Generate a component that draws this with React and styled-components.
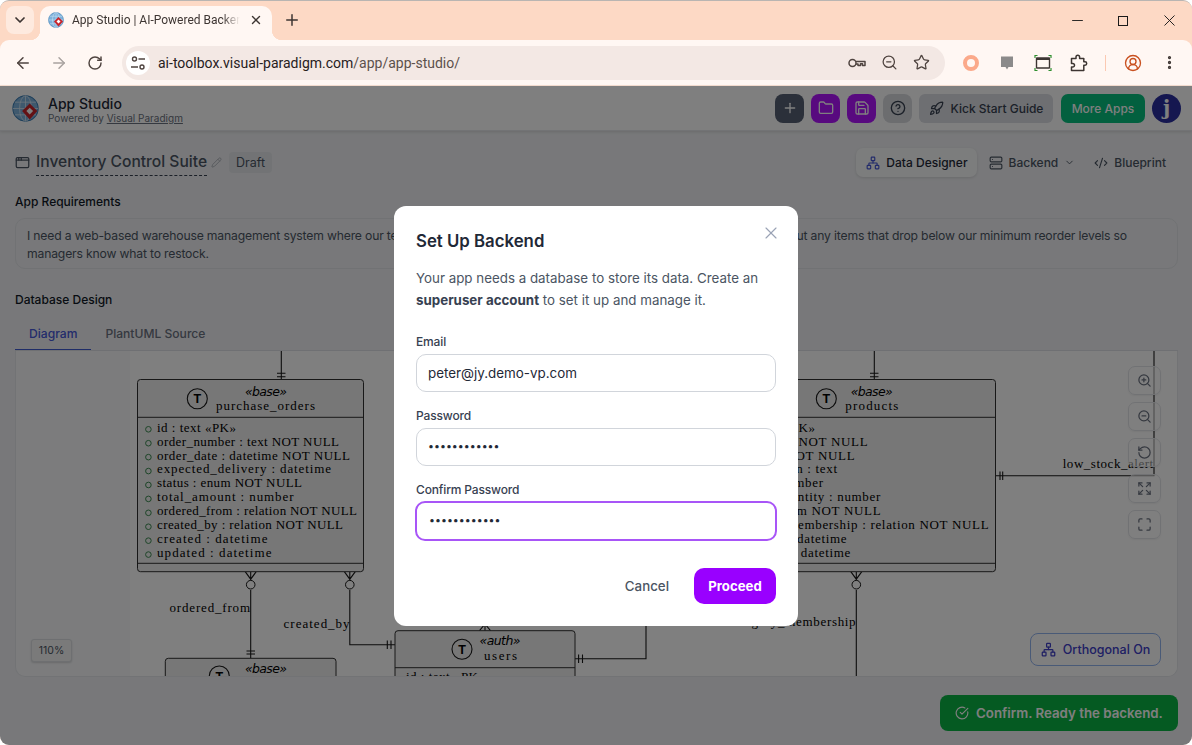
import styled, { createGlobalStyle } from "styled-components";
import {
  ArrowLeft,
  ArrowRight,
  AppWindow,
  ChevronDown,
  CircleCheckBig,
  CircleHelp,
  CircleUserRound,
  CodeXml,
  EllipsisVertical,
  Expand,
  Folder,
  Maximize,
  Minus,
  Network,
  Pencil,
  Plus,
  Rocket,
  RotateCcw,
  RotateCw,
  Save,
  Server,
  Star,
  X,
  ZoomIn,
  ZoomOut,
} from "lucide-react";

const GlobalStyle = createGlobalStyle`
  * { box-sizing: border-box; }
  html, body { margin: 0; padding: 0; background: #fff; }
  body { font-family: Inter, "Noto Sans", sans-serif; }
`;

function Logo({ size }) {
  return (
    <svg width={size} height={size} viewBox="0 0 32 32">
      <circle cx="16" cy="16" r="15" fill="#7fb2dc" stroke="#3d7fb5" strokeWidth="1.2" />
      <g fill="none" stroke="#dcecf7" strokeWidth="0.9">
        <ellipse cx="16" cy="16" rx="7" ry="15" />
        <path d="M16 1v30M1 16h30M3.5 8.5h25M3.5 23.5h25" />
      </g>
      <path d="M21 10l9 9-9 10-9-10z" fill="#c8252b" />
      <path d="M21 15l4 4-4 4-4-4z" fill="#fff" />
    </svg>
  );
}

function KeyIcon() {
  return (
    <svg width="20" height="20" viewBox="0 0 20 20" fill="none" stroke="#4f4440" strokeWidth="1.5">
      <circle cx="5.5" cy="10" r="3.5" />
      <path d="M9 8.5h9v4h-2.5v-1.7h-2v1.7H11V11H9" strokeLinejoin="round" />
    </svg>
  );
}

function SiteControlsIcon() {
  return (
    <svg width="16" height="16" viewBox="0 0 16 16" fill="none" stroke="#4f4440" strokeWidth="1.4">
      <circle cx="4.5" cy="4" r="2" />
      <path d="M8.5 4H15M1 12h7" />
      <circle cx="12" cy="12" r="2" />
    </svg>
  );
}

function ChatIcon() {
  return (
    <svg width="16" height="16" viewBox="0 0 16 16">
      <path d="M2 1.5h12v10.5h-4.5L8 14.5 6.500 12H2z" fill="#8b8a8a" />
    </svg>
  );
}

function CaptureIcon() {
  return (
    <svg width="18" height="18" viewBox="0 0 18 18" fill="none">
      <path d="M1 4V1.500h2.500M14.500 1.500H17V4M17 14v2.500h-2.500M3.500 16.500H1V14" stroke="#2f8f2f" strokeWidth="1.200" />
      <rect x="2.500" y="4" width="13" height="10" rx="0.500" stroke="#3d3532" strokeWidth="1.400" />
      <path d="M2.500 5h13" stroke="#3d3532" strokeWidth="2" />
    </svg>
  );
}

function PuzzleIcon() {
  return (
    <svg width="18" height="18" viewBox="0 0 18 18" fill="none" stroke="#3d3532" strokeWidth="1.500" strokeLinejoin="round">
      <path d="M1.500 4.500H6V3a1.800 1.800 0 0 1 3.600 0v1.500h4.200v3.300H15a1.700 1.700 0 0 1 0 3.400h-1.200v5.300H1.500v-3.500h1.200a1.800 1.800 0 0 0 0-3.600H1.500z" />
    </svg>
  );
}

const purchaseRows = [
  ["id : text «PK»", 79],
  ["order_number : text NOT NULL", 182],
  ["order_date : datetime NOT NULL", 193],
  ["expected_delivery : datetime", 174],
  ["status : enum NOT NULL", 145],
  ["total_amount : number", 136.5],
  ["ordered_from : relation NOT NULL", 200],
  ["created_by : relation NOT NULL", 186],
  ["created : datetime", 110.5],
  ["updated : datetime", 114.5],
];

const productRows = [
  ["id : text «PK»", 815.7],
  ["sku : text NOT NULL", 868.3],
  ["name : text NOT NULL", 855.3],
  ["description : text", 837.7],
  ["price : number", 823.7],
  ["stock_quantity : number", 881],
  ["status : enum NOT NULL", 881.3],
  ["category_membership : relation NOT NULL", 989.3],
  ["created : datetime", 847.3],
  ["updated : datetime", 851],
];

const ROW_STEP = 13.92;

function EntityShell({ x, y, w, h, divider, cx, cy, kind, kindX, kindW, kindY, name, nameX, nameW, nameY, bottom }) {
  return (
    <g>
      <BoxRect x={x} y={y} width={w} height={h} rx="3" />
      <BoxLine x1={x} x2={x + w} y1={divider} y2={divider} />
      {bottom && <BoxLine x1={x} x2={x + w} y1={bottom} y2={bottom} />}
      <circle cx={cx} cy={cy} r="10" fill="none" stroke="#181818" strokeWidth="1.100" />
      <TMark x={cx} y={cy + 4.500}>T</TMark>
      <Stereo x={kindX} y={kindY} textLength={kindW} lengthAdjust="spacing">
        «{kind}»
      </Stereo>
      {name && (
        <Mono x={nameX} y={nameY} textLength={nameW} lengthAdjust="spacing">
          {name}
        </Mono>
      )}
    </g>
  );
}

function CrowFoot({ x, y }) {
  return (
    <g>
      <Edge d={`M${x - 5.500} ${y}L${x} ${y + 7.500}L${x + 5.500} ${y}M${x} ${y}V${y + 8.500}`} />
      <circle cx={x} cy={y + 13} r="4.300" fill="none" stroke="#181818" strokeWidth="1" />
    </g>
  );
}

function Diagram() {
  return (
    <DiagramSvg width="1163" height="326" viewBox="15 351 1163 326">
      <rect x="130" y="351" width="1048" height="326" fill="#fff" />
      {/* edges */}
      <Edge d="M281.300 351V379.500M277 373.300H285.500M277 376.700H285.500" />
      <Edge d="M874.300 351V379.500M870 373.300H878.500M870 376.700H878.500" />
      <Edge d="M1154 351V475.700H995.500M1000 471.500V480M1002.700 471.500V480" />
      <Edge d="M250.700 590V658.300M246.500 651H255M246.500 654H255" />
      <Edge d="M349.800 590V644.700H395M387.300 640.500V649M391 640.500V649" />
      <Edge d="M575 658.700H646V620M578.600 654.500V663M582.500 654.500V663" />
      <Edge d="M856.300 590V677" />
      <Edge d="M485 620V630.700M479.500 630.700L485 624L490.500 630.700" />

      <CrowFoot x={250.700} y={571.700} />
      <CrowFoot x={349.800} y={571.700} />
      <CrowFoot x={856.300} y={571.700} />

      <EntityShell
        x={137.500} y={379.500} w={226} h={192.200} divider={417.300} bottom={563.300}
        cx={197.300} cy={398.700}
        kind="base" kindX={245} kindW={42} kindY={395.700}
        name="purchase_orders" nameX={216} nameW={99} nameY={410}
      />
      {purchaseRows.map(([text, len], i) => (
        <g key={text}>
          <Dot cx="148.400" cy={429.300 + i * ROW_STEP} r="2.800" />
          <Mono x="157" y={431.700 + i * ROW_STEP} textLength={len} lengthAdjust="spacing">
            {text}
          </Mono>
        </g>
      ))}

      <EntityShell
        x={770} y={379.500} w={225.500} h={192.200} divider={417.300} bottom={563.300}
        cx={826.300} cy={398.700}
        kind="base" kindX={850.700} kindW={42} kindY={395.700}
        name="products" nameX={845.300} nameW={53} nameY={410}
      />
      {productRows.map(([text, end], i) => (
        <EndMono key={text} x={end} y={431.700 + i * ROW_STEP}>
          {text}
        </EndMono>
      ))}

      <EntityShell
        x={165.300} y={658.300} w={170.700} h={60} divider={696}
        cx={219.300} cy={676}
        kind="base" kindX={245} kindW={42} kindY={673}
      />
      <EntityShell
        x={395} y={630.700} w={180} h={80} divider={667.700}
        cx={462} cy={649.300}
        kind="auth" kindX={479.500} kindW={41} kindY={645.300}
        name="users" nameX={484} nameW={33} nameY={660}
      />
      <Mono x="406" y="681" textLength="79" lengthAdjust="spacing">id : text «PK»</Mono>

      <Mono x="169.500" y="611.700" textLength="80.500" lengthAdjust="spacing">ordered_from</Mono>
      <Mono x="283.600" y="627.700" textLength="66" lengthAdjust="spacing">created_by</Mono>
      <EndMono x="856.300" y="625.700">category_membership</EndMono>
      <Mono x="1062.700" y="467.700" textLength="90.500" lengthAdjust="spacing">low_stock_alert</Mono>
    </DiagramSvg>
  );
}

export default function App() {
  return (
    <>
      <GlobalStyle />
      <Window>
        <TabStrip>
          <TabListButton>
            <ChevronDown size={16} strokeWidth={2.600} />
          </TabListButton>
          <Tab>
            <Logo size={16} />
            <TabTitle>App Studio | AI-Powered Backend</TabTitle>
            <X size={14} strokeWidth={2.400} color="#3d3532" />
          </Tab>
          <NewTab>
            <Plus size={18} strokeWidth={2} />
          </NewTab>
          <WindowControls>
            <WindowButton><Minus size={17} strokeWidth={1.300} /></WindowButton>
            <WindowButton><MaximizeBox /></WindowButton>
            <WindowButton><X size={19} strokeWidth={1.200} /></WindowButton>
          </WindowControls>
        </TabStrip>

        <Toolbar>
          <NavButton><ArrowLeft size={18} /></NavButton>
          <NavButton $off><ArrowRight size={18} /></NavButton>
          <NavButton><RotateCw size={16} strokeWidth={2.200} /></NavButton>
          <Omnibox>
            <SiteBadge><SiteControlsIcon /></SiteBadge>
            <Url>
              ai-toolbox.visual-paradigm.com<UrlPath>/app/app-studio/</UrlPath>
            </Url>
            <OmniIcon><KeyIcon /></OmniIcon>
            <OmniIcon><ZoomOut size={17} strokeWidth={1.800} /></OmniIcon>
            <OmniIcon><Star size={17} strokeWidth={1.800} /></OmniIcon>
          </Omnibox>
          <Extensions>
            <ExtSlot><PeachRing /></ExtSlot>
            <ExtSlot><ChatIcon /></ExtSlot>
            <ExtSlot><CaptureIcon /></ExtSlot>
            <ExtSlot><PuzzleIcon /></ExtSlot>
            <ExtDivider />
            <ExtSlot><CircleUserRound size={18} color="#c9501f" strokeWidth={1.800} /></ExtSlot>
            <ExtSlot><EllipsisVertical size={17} strokeWidth={2.600} color="#3d3532" /></ExtSlot>
          </Extensions>
        </Toolbar>

        <Page>
          <Header>
            <Logo size={27} />
            <Brand>
              <BrandName>App Studio</BrandName>
              <BrandSub>
                Powered by <u>Visual Paradigm</u>
              </BrandSub>
            </Brand>
            <HeaderActions>
              <IconButton $bg="#566074" $fg="#fff"><Plus size={16} /></IconButton>
              <IconButton $bg="#b014ff" $fg="#fff"><Folder size={16} /></IconButton>
              <IconButton $bg="#b014ff" $fg="#fff"><Save size={16} /></IconButton>
              <IconButton $bg="#d8dadf" $fg="#374151"><CircleHelp size={16} /></IconButton>
              <GuideButton><Rocket size={15} />Kick Start Guide</GuideButton>
              <MoreApps>More Apps</MoreApps>
              <Avatar>j</Avatar>
            </HeaderActions>
          </Header>

          <Main>
            <TitleRow>
              <AppWindow size={15} color="#4b5563" />
              <AppTitle>Inventory Control Suite</AppTitle>
              <Pencil size={11} color="#aeb2ba" />
              <DraftChip>Draft</DraftChip>
              <ModeTabs>
                <ModeTab $active>
                  <Network size={14} color="#4557d6" />
                  Data Designer
                </ModeTab>
                <ModeTab>
                  <Server size={14} />
                  Backend
                  <ChevronDown size={11} />
                </ModeTab>
                <ModeTab>
                  <CodeXml size={14} />
                  Blueprint
                </ModeTab>
              </ModeTabs>
            </TitleRow>

            <SectionLabel>App Requirements</SectionLabel>
            <Requirements>
              I need a web-based warehouse management system where our team can track stock across locations, log their orders, and get alerts about any items that drop below our minimum reorder levels so managers know what to restock.
            </Requirements>

            <SectionLabel>Database Design</SectionLabel>
            <DiagramTabs>
              <DiagramTab $active>Diagram</DiagramTab>
              <DiagramTab>PlantUML Source</DiagramTab>
            </DiagramTabs>

            <Panel>
              <Diagram />
              <ZoomColumn>
                <ZoomButton><ZoomIn size={15} /></ZoomButton>
                <ZoomButton><ZoomOut size={15} /></ZoomButton>
                <ZoomButton><RotateCcw size={15} /></ZoomButton>
                <ZoomButton><Expand size={15} /></ZoomButton>
                <ZoomButton><Maximize size={15} /></ZoomButton>
              </ZoomColumn>
              <ZoomLevel>110%</ZoomLevel>
              <OrthogonalButton>
                <Network size={15} />
                Orthogonal On
              </OrthogonalButton>
            </Panel>
          </Main>

          <Toast>
            <CircleCheckBig size={14} />
            Confirm. Ready the backend.
          </Toast>

          <Overlay>
            <Modal>
              <CloseButton><X size={20} strokeWidth={1.400} /></CloseButton>
              <ModalTitle>Set Up Backend</ModalTitle>
              <ModalText>
                Your app needs a database to store its data. Create an <strong>superuser account</strong> to set it up and manage it.
              </ModalText>
              <FieldLabel>Email</FieldLabel>
              <Field type="text" value="peter@jy.demo-vp.com" readOnly />
              <FieldLabel>Password</FieldLabel>
              <Field type="password" value="abcdefghijkl" readOnly />
              <FieldLabel>Confirm Password</FieldLabel>
              <Field $focused type="password" value="abcdefghijkl" readOnly />
              <ModalFooter>
                <CancelButton>Cancel</CancelButton>
                <ProceedButton>Proceed</ProceedButton>
              </ModalFooter>
            </Modal>
          </Overlay>
        </Page>
      </Window>
    </>
  );
}

const Window = styled.div`
  width: 1192px;
  height: 745px;
  display: flex;
  flex-direction: column;
  overflow: hidden;
  border-radius: 9px;
  border-top: 1px solid #b9b5b2;
  background: #fdd9c5;
`;

const TabStrip = styled.div`
  height: 39px;
  flex: none;
  display: flex;
  align-items: flex-end;
  padding-left: 6px;
  color: #3d3532;
`;

const TabListButton = styled.div`
  width: 28px;
  height: 28px;
  margin-bottom: 6px;
  border-radius: 8px;
  background: #feeadf;
  display: flex;
  align-items: center;
  justify-content: center;
`;

const Tab = styled.div`
  position: relative;
  width: 232px;
  height: 34px;
  margin-left: 6px;
  padding: 0 9px 6px 8px;
  border-radius: 10px 10px 0 0;
  background: #fff7f3;
  display: flex;
  align-items: center;
  gap: 8px;

  &::before,
  &::after {
    content: "";
    position: absolute;
    bottom: 0;
    width: 10px;
    height: 10px;
  }
  &::before {
    left: -10px;
    background: radial-gradient(circle at 0 0, transparent 10px, #fff7f3 10.500px);
  }
  &::after {
    right: -10px;
    background: radial-gradient(circle at 100% 0, transparent 10px, #fff7f3 10.500px);
  }
`;

const TabTitle = styled.span`
  flex: 1;
  overflow: hidden;
  white-space: nowrap;
  font-family: Roboto, sans-serif;
  font-size: 12px;
  color: #3d3532;
  mask-image: linear-gradient(to right, #000 150px, transparent 168px);
`;

const NewTab = styled.div`
  width: 20px;
  height: 20px;
  margin: 0 0 10px 10px;
  display: flex;
  align-items: center;
  justify-content: center;
`;

const WindowControls = styled.div`
  margin-left: auto;
  display: flex;
  align-self: stretch;
`;

const WindowButton = styled.div`
  width: 46px;
  display: flex;
  align-items: center;
  justify-content: center;
  color: #1a1a1a;
`;

const MaximizeBox = styled.div`
  width: 10px;
  height: 10px;
  border: 1.200px solid #1a1a1a;
`;

const Toolbar = styled.div`
  height: 46px;
  flex: none;
  display: flex;
  align-items: center;
  padding: 0 0 0 5px;
  background: #fff7f3;
  border-bottom: 1px solid #f7dfd2;
  border-radius: 9px 9px 0 0;
`;

const NavButton = styled.div`
  width: 36px;
  display: flex;
  justify-content: center;
  color: ${(p) => (p.$off ? "#a9a3a0" : "#4f4440")};
`;

const Omnibox = styled.div`
  width: 823px;
  height: 34px;
  margin-left: 9px;
  padding: 0 8px 0 4px;
  border-radius: 17px;
  background: #f3e8e4;
  display: flex;
  align-items: center;
  color: #4f4440;
`;

const SiteBadge = styled.div`
  width: 24px;
  height: 24px;
  border-radius: 50%;
  background: #fff;
  display: flex;
  align-items: center;
  justify-content: center;
`;

const Url = styled.div`
  flex: 1;
  margin-left: 8px;
  font-family: Roboto, sans-serif;
  font-size: 14px;
  color: #26201d;
`;

const UrlPath = styled.span`
  color: #5c514c;
`;

const OmniIcon = styled.div`
  width: 32px;
  display: flex;
  justify-content: center;
`;

const Extensions = styled.div`
  flex: 1;
  display: flex;
  align-items: center;
  padding-left: 8px;
`;

const ExtSlot = styled.div`
  width: 36px;
  display: flex;
  justify-content: center;
`;

const ExtDivider = styled.div`
  width: 1px;
  height: 16px;
  margin: 0 9px 0 8px;
  background: #fbc9b2;
`;

const PeachRing = styled.div`
  width: 16px;
  height: 16px;
  border: 4px solid #fba98a;
  border-radius: 50%;
`;

const Page = styled.div`
  position: relative;
  flex: 1;
  min-height: 0;
  background: #f0f1f4;
  color: #374151;
`;

const Header = styled.header`
  height: 45px;
  padding: 0 11px 0 12px;
  display: flex;
  align-items: center;
  background: #fff;
  border-bottom: 1px solid #e5e7eb;
  box-shadow: 0 1px 3px rgba(0, 0, 0, 0.12);
`;

const Brand = styled.div`
  margin-left: 9px;
  padding-top: 4px;
  display: flex;
  flex-direction: column;
`;

const BrandName = styled.div`
  font-size: 14px;
  line-height: 17px;
  font-weight: 500;
  color: #1f2937;
`;

const BrandSub = styled.div`
  font-size: 10px;
  line-height: 13px;
  color: #6b7280;
`;

const HeaderActions = styled.div`
  margin-left: auto;
  display: flex;
  align-items: center;
  gap: 7px;
`;

const IconButton = styled.div`
  width: 29px;
  height: 29px;
  border-radius: 8px;
  background: ${(p) => p.$bg};
  color: ${(p) => p.$fg};
  display: flex;
  align-items: center;
  justify-content: center;
`;

const GuideButton = styled.div`
  width: 134px;
  height: 29px;
  padding-top: 1px;
  border-radius: 6px;
  background: #dcdee4;
  display: flex;
  align-items: center;
  justify-content: center;
  gap: 7px;
  font-size: 12px;
  font-weight: 500;
`;

const MoreApps = styled.div`
  width: 84px;
  height: 29px;
  margin-left: 1px;
  padding-top: 1px;
  border-radius: 7px;
  background: #06c07e;
  color: #fff;
  display: flex;
  align-items: center;
  justify-content: center;
  font-size: 12px;
  font-weight: 500;
`;

const Avatar = styled.div`
  width: 29px;
  height: 29px;
  border-radius: 50%;
  background: #2a2fa0;
  color: #fff;
  display: flex;
  align-items: center;
  justify-content: center;
  font-family: "DejaVu Serif", serif;
  font-size: 20px;
  font-weight: 700;
`;

const Main = styled.main`
  padding: 17px 14px 0 15px;
`;

const TitleRow = styled.div`
  height: 29px;
  margin-bottom: 16px;
  display: flex;
  align-items: center;
`;

const AppTitle = styled.div`
  margin: 2px 4px 0 6px;
  padding-bottom: 2px;
  border-bottom: 1px dashed #374151;
  font-size: 15.600px;
  line-height: 22px;
  font-weight: 500;
  color: #4b5563;
`;

const DraftChip = styled.div`
  margin-left: 7px;
  padding: 0 7px;
  height: 21px;
  border-radius: 4px;
  background: #e5e7eb;
  font-size: 12.500px;
  line-height: 21px;
  color: #4b5563;
`;

const ModeTabs = styled.div`
  margin-left: auto;
  padding-right: 5px;
  display: flex;
  align-items: center;
  gap: 3px;
`;

const ModeTab = styled.div`
  height: 29px;
  padding: 0 ${(p) => (p.$active ? "9px" : "7px")} 0 ${(p) => (p.$active ? "10px" : "9px")};
  border-radius: 7px;
  display: flex;
  align-items: center;
  gap: 6px;
  font-size: 12px;
  font-weight: 500;
  color: ${(p) => (p.$active ? "#1f2937" : "#4b5563")};
  background: ${(p) => (p.$active ? "#f9fafb" : "transparent")};
  box-shadow: ${(p) => (p.$active ? "0 1px 3px rgba(0,0,0,.12)" : "none")};
`;

const SectionLabel = styled.div`
  height: 18px;
  margin-bottom: 7px;
  font-size: 12px;
  line-height: 18px;
  font-weight: 500;
  color: #111827;
`;

const Requirements = styled.div`
  height: 51px;
  margin-bottom: 22px;
  padding: 8px 11px;
  border: 1px solid #e2e4e8;
  border-radius: 10px;
  font-size: 12.200px;
  letter-spacing: -0.180px;
  line-height: 18px;
  color: #4b5563;
`;

const DiagramTabs = styled.div`
  height: 28px;
  margin-top: 14px;
  display: flex;
  border-bottom: 1px solid #dfe1e6;
`;

const DiagramTab = styled.div`
  height: 27px;
  padding: 0 14px;
  font-size: 12.100px;
  font-weight: 500;
  line-height: 22px;
  color: ${(p) => (p.$active ? "#4658d8" : "#6b7280")};
  border-bottom: ${(p) => (p.$active ? "1px solid #3f5bd0" : "none")};
`;

const Panel = styled.div`
  position: relative;
  height: 326px;
  overflow: hidden;
  background: #f8f9fb;
  border: 1px solid #e5e7eb;
  border-top: 0;
  border-radius: 0 0 10px 10px;
`;

const DiagramSvg = styled.svg`
  display: block;
  margin-left: -1px;
`;

const BoxRect = styled.rect`
  fill: #efefef;
  stroke: #303030;
  stroke-width: 1;
`;

const BoxLine = styled.line`
  stroke: #303030;
  stroke-width: 1;
`;

const Edge = styled.path`
  fill: none;
  stroke: #181818;
  stroke-width: 1.100;
`;

const Dot = styled.circle`
  fill: none;
  stroke: #3b8a50;
  stroke-width: 1;
`;

const Mono = styled.text`
  font-family: "Liberation Serif", serif;
  font-size: 13px;
  fill: #000;
`;

const EndMono = styled(Mono)`
  text-anchor: end;
  letter-spacing: 0.680px;
`;

const Stereo = styled.text`
  font-family: "DejaVu Sans", sans-serif;
  font-style: oblique;
  font-size: 12.500px;
  fill: #000;
`;

const TMark = styled.text`
  font-family: "Liberation Sans", sans-serif;
  font-weight: 700;
  font-size: 12.500px;
  text-anchor: middle;
  fill: #000;
`;

const ZoomColumn = styled.div`
  position: absolute;
  top: 15px;
  right: 16px;
  display: flex;
  flex-direction: column;
  gap: 7px;
`;

const ZoomButton = styled.div`
  width: 33px;
  height: 29px;
  border: 1px solid #e3e5e9;
  border-radius: 7px;
  background: rgba(255, 255, 255, 0.55);
  box-shadow: 0 1px 2px rgba(0, 0, 0, 0.06);
  color: #6b7280;
  display: flex;
  align-items: center;
  justify-content: center;
`;

const ZoomLevel = styled.div`
  position: absolute;
  left: 15px;
  top: 288px;
  width: 41px;
  height: 23px;
  border: 1px solid #dcdee2;
  border-radius: 3px;
  background: #f5f5f5;
  box-shadow: 0 1px 2px rgba(0, 0, 0, 0.15);
  font-size: 10.500px;
  line-height: 21px;
  text-align: center;
  color: #4b5563;
`;

const OrthogonalButton = styled.div`
  position: absolute;
  right: 16px;
  top: 282px;
  width: 131px;
  height: 33px;
  border: 1px solid #93b4ef;
  border-radius: 8px;
  background: #fff;
  color: #4040c8;
  display: flex;
  align-items: center;
  justify-content: center;
  gap: 7px;
  font-size: 12.500px;
  font-weight: 500;
`;

const Toast = styled.div`
  position: absolute;
  right: 14px;
  bottom: 14px;
  width: 238px;
  height: 36px;
  padding-left: 15px;
  border-radius: 8px;
  background: #0ab444;
  color: #fff;
  display: flex;
  align-items: center;
  gap: 7px;
  font-size: 13.300px;
  font-weight: 600;
`;

const Overlay = styled.div`
  position: absolute;
  inset: 0;
  background: rgba(0, 0, 0, 0.5);
  display: flex;
  align-items: center;
  justify-content: center;
`;

const Modal = styled.div`
  position: relative;
  width: 404px;
  height: 420px;
  padding: 22px;
  border-radius: 12px;
  background: #fff;
  display: flex;
  flex-direction: column;
`;

const CloseButton = styled.div`
  position: absolute;
  top: 17px;
  right: 17px;
  color: #9aa3b5;
  display: flex;
`;

const ModalTitle = styled.h2`
  margin: 0;
  font-size: 16.800px;
  line-height: 26px;
  font-weight: 600;
  color: #1f2937;
`;

const ModalText = styled.p`
  margin: 13px 0 21px;
  font-size: 13.350px;
  line-height: 22px;
  color: #4b5563;

  strong {
    font-weight: 700;
    color: #374151;
  }
`;

const FieldLabel = styled.label`
  height: 18px;
  margin: 0 0 4px;
  font-size: 12px;
  letter-spacing: -0.150px;
  line-height: 20px;
  font-weight: 500;
  color: #374151;
`;

const Field = styled.input`
  flex: none;
  width: ${(p) => (p.$focused ? "362px" : "360px")};
  height: ${(p) => (p.$focused ? "40px" : "38px")};
  margin: ${(p) => (p.$focused ? "-1px -1px 0" : "0 0 14px")};
  padding: 0 ${(p) => (p.$focused ? "12px" : "11px")};
  border: ${(p) => (p.$focused ? "2px solid #a855f7" : "1px solid #d1d5db")};
  border-radius: 10px;
  outline: none;
  background: #fff;
  font-family: Inter, sans-serif;
  font-size: 13.400px;
  color: #1f2937;

  &[type="password"] {
    font-size: 10.600px;
  }
`;

const ModalFooter = styled.div`
  margin-top: auto;
  display: flex;
  justify-content: flex-end;
  align-items: center;
  gap: 10px;
`;

const CancelButton = styled.div`
  padding: 1px 15px 0;
  font-size: 13.300px;
  font-weight: 500;
  color: #4b5563;
`;

const ProceedButton = styled.div`
  width: 82px;
  height: 36px;
  padding-top: 1px;
  border-radius: 10px;
  background: #9900ff;
  color: #fff;
  display: flex;
  align-items: center;
  justify-content: center;
  font-size: 13.200px;
  font-weight: 700;
`;
